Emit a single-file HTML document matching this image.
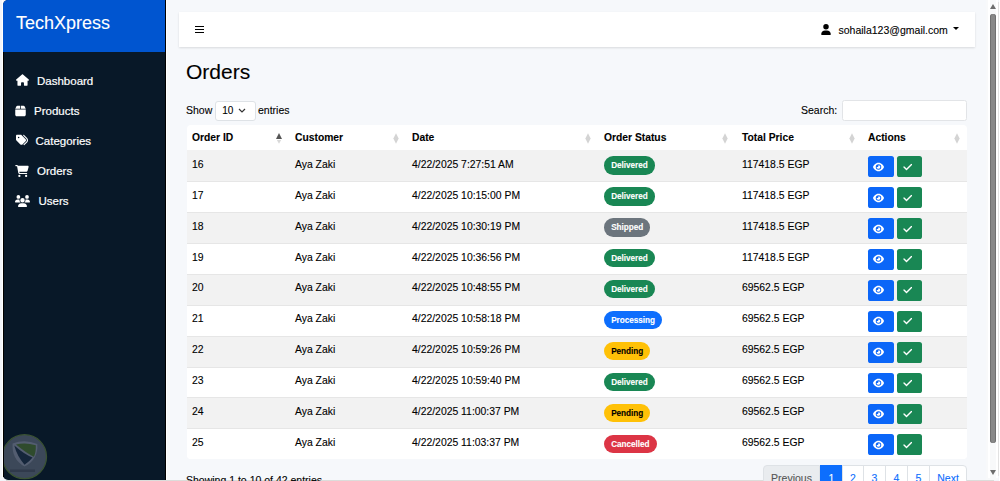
<!DOCTYPE html>
<html><head><meta charset="utf-8">
<style>
*{box-sizing:border-box;margin:0;padding:0}
html,body{width:1000px;height:481px;overflow:hidden;background:#f3f5fa;font-family:"Liberation Sans",sans-serif;color:#000;-webkit-text-stroke:0.1px currentColor}
.win{position:absolute;left:3px;top:0;width:995px;height:480px;background:#f6f8fb;border-radius:5px;overflow:hidden}
.side{position:absolute;left:3px;top:0;width:163px;height:480px;background:#081828;border-radius:5px 0 0 5px;overflow:hidden}
.brand{position:absolute;left:0;top:0;width:163px;height:52px;background:#0055d0}
.brand span{position:absolute;left:13px;top:13px;font-size:18px;color:#fff;line-height:20px;white-space:nowrap}
.nav{position:absolute;left:0;height:14px;width:160px;font-size:11.5px;color:#fff;white-space:nowrap;line-height:14px}
.nav svg{position:absolute;fill:#fff}
.nav span{position:absolute;top:0;-webkit-text-stroke:0.2px #fff}
.a{position:absolute;white-space:nowrap}
.topbar{position:absolute;left:179px;top:12px;width:796px;height:35px;background:#fff;box-shadow:0 1px 2px rgba(0,0,0,.12)}
.sel{position:absolute;left:215px;top:100.5px;width:40.5px;height:20px;background:#fff;border:1px solid #dee2e6;border-radius:3px}
.inp{position:absolute;left:842px;top:100.3px;width:125px;height:20.5px;background:#fff;border:1px solid #e2e4e7;border-radius:2.5px}
.tbl{position:absolute;left:187px;top:124.6px;width:780px;height:334.6px;background:#fff;border-radius:4px;overflow:hidden}
.th{position:absolute;top:0;height:26px;left:0;width:780px;font-size:10.3px;font-weight:bold;color:#000}
.th span{position:absolute;top:7.6px;line-height:12px}
.si{position:absolute;top:8px;width:6px;height:11px}
.si i{position:absolute;left:0;width:0;height:0;border-left:3px solid transparent;border-right:3px solid transparent}
.si i.up{top:0;border-bottom:5px solid #e2e2e2}
.si i.dn{top:5.5px;border-top:5px solid #e2e2e2}
.si i.up.dk{border-bottom-color:#555}
.tr{position:absolute;left:0;width:780px;height:30.9px;border-top:1px solid #e6e6e6;font-size:10.4px;color:#000;background:#fff}
.tr.odd{background:#f2f2f2}
.tr.first{border-top-color:#f2f2f2}
.tr .c{position:absolute;top:7.6px;line-height:12px;white-space:nowrap}
.badge{position:absolute;top:5.2px;height:18.3px;line-height:20px;padding:0 7.2px 0 7.7px;border-radius:9.2px;font-size:8.2px;letter-spacing:-0.05px;font-weight:bold;color:#fff;white-space:nowrap}
.bg-s{background:#198754}.bg-g{background:#6c757d}.bg-p{background:#0d6efd}.bg-w{background:#ffc107;color:#000}.bg-d{background:#dc3545}
.btn{position:absolute;top:5.1px;height:20.8px;border-radius:2.6px;display:flex;align-items:center;justify-content:flex-start}
.btn svg{fill:#fff}
.bp{width:26px;background:#0b66f8;padding-left:5px}
.bs{width:24.3px;background:#198754;padding-left:5.6px}
.pg{position:absolute;top:465px;height:20px;border:1px solid #dee2e6;background:#fff;font-size:10.5px;color:#0d6efd;text-align:center;line-height:18px;padding-top:2.5px}
.sb{position:absolute;left:986px;top:0;width:12px;height:480px;background:#f8f9fa}
</style></head><body>
<div class="win"></div>
<div class="a" style="left:2px;top:0;width:1px;height:478px;background:#fff"></div>
<div class="a" style="left:6px;top:480px;width:988px;height:1px;background:#dcdcda"></div>
<div class="side">
  <div class="brand"><span>TechXpress</span></div>
<svg class="a" width="52" height="52" viewBox="0 0 52 52" style="left:-4px;top:431px">
<circle cx="25.5" cy="25.7" r="22" fill="#3c4859" stroke="#3a5233" stroke-width="1.3"/>
<path d="M13.6 12.6 Q25.5 7.5 38.3 13 Q39.5 28.5 25.5 35.6 Q12.5 28.5 13.6 12.6Z" fill="#535d70"/>
<path d="M15.3 14.6 Q18 25 25.5 33.8 Q31 30 33.5 26.5 Q26 24 15.3 14.6Z" fill="#15263b"/>
<path d="M17 13.6 Q26 11 36.8 14.3 Q37 22 34.8 25.8 Q27 22 17 13.6Z" fill="#2f4b2d"/>
<path d="M11 38.5 h25 v2.5 h-25z" fill="#2b3546" opacity=".7"/>
</svg>
</div>
<div class="nav" style="top:74px"><svg viewBox="0 0 576 512" width="13" height="12" style="left:15.6px;top:0"><path d="M575.8 255.5c0 18-15 32.1-32 32.1h-32l.7 160.2c0 2.7-.2 5.4-.5 8.1V472c0 22.1-17.9 40-40 40H456c-1.1 0-2.2 0-3.3-.1c-1.4 .1-2.8 .1-4.2 .1H416 392c-22.1 0-40-17.9-40-40V448 384c0-17.7-14.3-32-32-32H256c-17.7 0-32 14.3-32 32v64 24c0 22.1-17.9 40-40 40H160 128.1c-1.5 0-3-.1-4.5-.2c-1.2 .1-2.4 .2-3.6 .2H104c-22.1 0-40-17.9-40-40V360c0-.9 0-1.9 .1-2.8V287.6H32c-18 0-32-14-32-32.1c0-9 3-17 10-24L266.4 8c7-7 15-8 22-8s15 2 21 7L564.8 231.5c8 7 12 15 11 24z"/></svg><span style="left:37px;top:-0.5px">Dashboard</span></div>
<div class="nav" style="top:104px"><svg viewBox="0 0 448 512" width="11" height="12" style="left:15px;top:0.6px"><path d="M50.7 58.5L0 160H208V32H93.7C75.5 32 58.9 42.3 50.7 58.5zM240 160H448L397.3 58.5C389.1 42.3 372.5 32 354.3 32H240V160zm208 32H0V416c0 35.3 28.7 64 64 64H384c35.3 0 64-28.7 64-64V192z"/></svg><span style="left:34px;top:-0.5px">Products</span></div>
<div class="nav" style="top:134px"><svg viewBox="0 0 512 512" width="12" height="12" style="left:15.5px;top:0.4px"><path d="M345 39.1L472.8 168.4c52.4 53 52.4 138.2 0 191.2L360.8 472.9c-9.3 9.4-24.5 9.5-33.9 .2s-9.5-24.5-.2-33.9L438.6 325.9c33.9-34.3 33.9-89.4 0-123.7L310.9 72.9c-9.3-9.4-9.2-24.6 .2-33.9s24.6-9.2 33.9 .2zM0 229.5V80C0 53.5 21.5 32 48 32H197.5c17 0 33.3 6.7 45.3 18.7l168 168c25 25 25 65.5 0 90.5L277.3 442.7c-25 25-65.5 25-90.5 0l-168-168C6.7 262.7 0 246.5 0 229.5zM144 144a32 32 0 1 0 -64 0 32 32 0 1 0 64 0z"/></svg><span style="left:35.5px;top:-0.5px">Categories</span></div>
<div class="nav" style="top:164px"><svg viewBox="0 0 576 512" width="14" height="12" style="left:15px;top:0.7px"><path d="M0 24C0 10.7 10.7 0 24 0H69.5c22 0 41.5 12.8 50.6 32h411c26.3 0 45.5 25 38.6 50.4l-41 152.3c-8.5 31.4-37 53.3-69.5 53.3H170.7l5.4 28.5c2.2 11.3 12.1 19.5 23.6 19.5H488c13.3 0 24 10.7 24 24s-10.7 24-24 24H199.7c-34.6 0-64.3-24.6-70.7-58.5L77.4 54.5c-.7-3.8-4-6.5-7.9-6.5H24C10.7 48 0 37.300 0 24zM128 464a48 48 0 1 1 96 0 48 48 0 1 1 -96 0zm336-48a48 48 0 1 1 0 96 48 48 0 1 1 0-96z"/></svg><span style="left:37px;top:-0.5px">Orders</span></div>
<div class="nav" style="top:194px"><svg viewBox="0 0 640 512" width="15" height="12" style="left:15.3px;top:1px"><path d="M144 0a80 80 0 1 1 0 160A80 80 0 1 1 144 0zM512 0a80 80 0 1 1 0 160A80 80 0 1 1 512 0zM0 298.7C0 239.8 47.8 192 106.7 192h42.7c15.9 0 31 3.5 44.6 9.7c-1.3 7.2-1.9 14.7-1.9 22.3c0 38.2 16.8 72.5 43.3 96c-.2 0-.4 0-.7 0H21.3C9.6 320 0 310.4 0 298.7zM405.3 320c-.2 0-.4 0-.7 0c26.6-23.5 43.3-57.8 43.3-96c0-7.6-.7-15-1.9-22.3c13.6-6.3 28.7-9.7 44.6-9.7h42.7C592.2 192 640 239.8 640 298.7c0 11.8-9.6 21.3-21.3 21.3H405.3zM224 224a96 96 0 1 1 192 0 96 96 0 1 1 -192 0zM128 485.3C128 411.7 187.7 352 261.3 352H378.7C452.3 352 512 411.7 512 485.3c0 14.7-11.9 26.7-26.7 26.7H154.7c-14.7 0-26.7-11.9-26.7-26.7z"/></svg><span style="left:38.5px;top:-0.5px">Users</span></div>

<div class="a" style="left:164.5px;top:0;width:1.5px;height:480px;background:#000"></div>
<div class="a" style="left:166px;top:0;width:1px;height:480px;background:#fff"></div>
<div class="a" style="left:3px;top:52px;width:1px;height:425px;background:#000"></div>
<div class="topbar"></div>
<div class="a" style="left:195px;top:25.7px;width:9.3px;height:1.3px;background:#000"></div>
<div class="a" style="left:195px;top:28.8px;width:9.3px;height:1.3px;background:#000"></div>
<div class="a" style="left:195px;top:31.9px;width:9.3px;height:1.3px;background:#000"></div>
<svg class="a" viewBox="0 0 448 512" width="10" height="11" style="left:821px;top:24px"><path d="M224 256A128 128 0 1 0 224 0a128 128 0 1 0 0 256zm-45.7 48C79.8 304 0 383.8 0 482.3C0 498.7 13.3 512 29.7 512H418.3c16.4 0 29.7-13.3 29.7-29.7C448 383.8 368.2 304 269.7 304H178.3z"/></svg>
<div class="a" style="left:838.5px;top:24px;font-size:10.5px;line-height:13px;color:#000">sohaila123@gmail.com</div>
<div class="a" style="left:953px;top:27px;width:0;height:0;border-left:3px solid transparent;border-right:3px solid transparent;border-top:3px solid #000"></div>

<div class="a" style="left:186px;top:60px;font-size:21px;line-height:24px;color:#000">Orders</div>
<div class="a" style="left:186px;top:104px;font-size:10.5px;line-height:12px;color:#000">Show</div>
<div class="sel"></div>
<div class="a" style="left:222.3px;top:105px;font-size:10px;line-height:12px;color:#000">10</div>
<svg class="a" width="8" height="5" viewBox="0 0 8 5" style="left:238px;top:108px"><path d="M1 1l3 3 3-3" fill="none" stroke="#333" stroke-width="1.2"/></svg>
<div class="a" style="left:258px;top:104px;font-size:10.5px;line-height:12px;color:#000">entries</div>
<div class="a" style="left:801px;top:104px;font-size:10.5px;line-height:12px;color:#000">Search:</div>
<div class="inp"></div>

<div class="tbl">
  <div class="th">
    <span style="left:5px">Order ID</span>
    <span style="left:108px">Customer</span>
    <span style="left:225px">Date</span>
    <span style="left:417px">Order Status</span>
    <span style="left:555px">Total Price</span>
    <span style="left:681px">Actions</span>
    <svg class="si" style="left:89px" width="6" height="11" viewBox="0 0 6 11"><path d="M3 0 L6 5.9 L0 5.9Z" fill="#555"/><path d="M0.9 6.9 L5.1 6.9 L3 10.8Z" fill="#d8d8d8"/></svg><svg class="si" style="left:206px" width="6" height="11" viewBox="0 0 6 11"><path d="M3 0.2 L5.6 5.5 L3 10.8 L0.4 5.5Z" fill="#d4d4d4"/></svg><svg class="si" style="left:398px" width="6" height="11" viewBox="0 0 6 11"><path d="M3 0.2 L5.6 5.5 L3 10.8 L0.4 5.5Z" fill="#d4d4d4"/></svg><svg class="si" style="left:535px" width="6" height="11" viewBox="0 0 6 11"><path d="M3 0.2 L5.6 5.5 L3 10.8 L0.4 5.5Z" fill="#d4d4d4"/></svg><svg class="si" style="left:662px" width="6" height="11" viewBox="0 0 6 11"><path d="M3 0.2 L5.6 5.5 L3 10.8 L0.4 5.5Z" fill="#d4d4d4"/></svg><svg class="si" style="left:767px" width="6" height="11" viewBox="0 0 6 11"><path d="M3 0.2 L5.6 5.5 L3 10.8 L0.4 5.5Z" fill="#d4d4d4"/></svg>
  </div>
  <div style="position:absolute;top:-124.3px;left:0">
  <div class="tr odd first" style="top:150.00px"><span class="c" style="left:5px">16</span><span class="c" style="left:108px">Aya Zaki</span><span class="c" style="left:225px">4/22/2025 7:27:51 AM</span><span class="badge bg-s" style="left:416.5px">Delivered</span><span class="c" style="left:555px">117418.5 EGP</span><span class="btn bp" style="left:681px"><svg viewBox="0 0 576 512" width="11" height="10"><path d="M288 32c-80.8 0-145.5 36.8-192.6 80.6C48.6 156 17.3 208 2.5 243.7c-3.3 7.9-3.3 16.7 0 24.6C17.3 304 48.6 356 95.4 399.4C142.5 443.2 207.2 480 288 480s145.5-36.8 192.6-80.6c46.8-43.5 78.1-95.4 93-131.1c3.3-7.9 3.3-16.7 0-24.6c-14.9-35.7-46.2-87.7-93-131.1C433.5 68.8 368.8 32 288 32zM144 256a144 144 0 1 1 288 0 144 144 0 1 1 -288 0zm144-64c0 35.3-28.7 64-64 64c-7.1 0-13.9-1.2-20.3-3.3c-5.5-1.8-11.9 1.6-11.7 7.4c.3 6.9 1.3 13.8 3.2 20.7c13.7 51.2 66.4 81.6 117.6 67.9s81.6-66.4 67.9-117.6c-11.1-41.5-47.8-69.4-88.6-71.1c-5.8-.2-9.2 6.1-7.4 11.7c2.1 6.4 3.3 13.2 3.3 20.3z"/></svg></span><span class="btn bs" style="left:710.3px"><svg viewBox="0 0 448 512" width="9.5" height="10"><path d="M438.6 105.4c12.5 12.5 12.5 32.8 0 45.3l-256 256c-12.5 12.5-32.8 12.5-45.3 0l-128-128c-12.5-12.5-12.5-32.8 0-45.3s32.8-12.5 45.3 0L160 338.7 393.4 105.4c12.5-12.5 32.8-12.5 45.3 0z" stroke="#fff" stroke-width="6"/></svg></span></div>
<div class="tr" style="top:180.90px"><span class="c" style="left:5px">17</span><span class="c" style="left:108px">Aya Zaki</span><span class="c" style="left:225px">4/22/2025 10:15:00 PM</span><span class="badge bg-s" style="left:416.5px">Delivered</span><span class="c" style="left:555px">117418.5 EGP</span><span class="btn bp" style="left:681px"><svg viewBox="0 0 576 512" width="11" height="10"><path d="M288 32c-80.8 0-145.5 36.8-192.6 80.6C48.6 156 17.3 208 2.5 243.7c-3.3 7.9-3.3 16.7 0 24.6C17.3 304 48.6 356 95.4 399.4C142.5 443.2 207.2 480 288 480s145.5-36.8 192.6-80.6c46.8-43.5 78.1-95.4 93-131.1c3.3-7.9 3.3-16.7 0-24.6c-14.9-35.7-46.2-87.7-93-131.1C433.5 68.8 368.8 32 288 32zM144 256a144 144 0 1 1 288 0 144 144 0 1 1 -288 0zm144-64c0 35.3-28.7 64-64 64c-7.1 0-13.9-1.2-20.3-3.3c-5.5-1.8-11.9 1.6-11.7 7.4c.3 6.9 1.3 13.8 3.2 20.7c13.7 51.2 66.4 81.6 117.6 67.9s81.6-66.4 67.9-117.6c-11.1-41.5-47.8-69.4-88.6-71.1c-5.8-.2-9.2 6.1-7.4 11.7c2.1 6.4 3.3 13.2 3.3 20.3z"/></svg></span><span class="btn bs" style="left:710.3px"><svg viewBox="0 0 448 512" width="9.5" height="10"><path d="M438.6 105.4c12.5 12.5 12.5 32.8 0 45.3l-256 256c-12.5 12.5-32.8 12.5-45.3 0l-128-128c-12.5-12.5-12.5-32.8 0-45.3s32.8-12.5 45.3 0L160 338.7 393.4 105.4c12.5-12.5 32.8-12.5 45.3 0z" stroke="#fff" stroke-width="6"/></svg></span></div>
<div class="tr odd" style="top:211.80px"><span class="c" style="left:5px">18</span><span class="c" style="left:108px">Aya Zaki</span><span class="c" style="left:225px">4/22/2025 10:30:19 PM</span><span class="badge bg-g" style="left:416.5px">Shipped</span><span class="c" style="left:555px">117418.5 EGP</span><span class="btn bp" style="left:681px"><svg viewBox="0 0 576 512" width="11" height="10"><path d="M288 32c-80.8 0-145.5 36.8-192.6 80.6C48.6 156 17.3 208 2.5 243.7c-3.3 7.9-3.3 16.7 0 24.6C17.3 304 48.6 356 95.4 399.4C142.5 443.2 207.2 480 288 480s145.5-36.8 192.6-80.6c46.8-43.5 78.1-95.4 93-131.1c3.3-7.9 3.3-16.7 0-24.6c-14.9-35.7-46.2-87.7-93-131.1C433.5 68.8 368.8 32 288 32zM144 256a144 144 0 1 1 288 0 144 144 0 1 1 -288 0zm144-64c0 35.3-28.7 64-64 64c-7.1 0-13.9-1.2-20.3-3.3c-5.5-1.8-11.9 1.6-11.7 7.4c.3 6.9 1.3 13.8 3.2 20.7c13.7 51.2 66.4 81.6 117.6 67.9s81.6-66.4 67.9-117.6c-11.1-41.5-47.8-69.4-88.6-71.1c-5.8-.2-9.2 6.1-7.4 11.7c2.1 6.4 3.3 13.2 3.3 20.3z"/></svg></span><span class="btn bs" style="left:710.3px"><svg viewBox="0 0 448 512" width="9.5" height="10"><path d="M438.6 105.4c12.5 12.5 12.5 32.8 0 45.3l-256 256c-12.5 12.5-32.8 12.5-45.3 0l-128-128c-12.5-12.5-12.5-32.8 0-45.3s32.8-12.5 45.3 0L160 338.7 393.4 105.4c12.5-12.5 32.8-12.5 45.3 0z" stroke="#fff" stroke-width="6"/></svg></span></div>
<div class="tr" style="top:242.70px"><span class="c" style="left:5px">19</span><span class="c" style="left:108px">Aya Zaki</span><span class="c" style="left:225px">4/22/2025 10:36:56 PM</span><span class="badge bg-s" style="left:416.5px">Delivered</span><span class="c" style="left:555px">117418.5 EGP</span><span class="btn bp" style="left:681px"><svg viewBox="0 0 576 512" width="11" height="10"><path d="M288 32c-80.8 0-145.5 36.8-192.6 80.6C48.6 156 17.3 208 2.5 243.7c-3.3 7.9-3.3 16.7 0 24.6C17.3 304 48.6 356 95.4 399.4C142.5 443.2 207.2 480 288 480s145.5-36.8 192.6-80.6c46.8-43.5 78.1-95.4 93-131.1c3.3-7.9 3.3-16.7 0-24.6c-14.9-35.7-46.2-87.7-93-131.1C433.5 68.8 368.8 32 288 32zM144 256a144 144 0 1 1 288 0 144 144 0 1 1 -288 0zm144-64c0 35.3-28.7 64-64 64c-7.1 0-13.9-1.2-20.3-3.3c-5.5-1.8-11.9 1.6-11.7 7.4c.3 6.9 1.3 13.8 3.2 20.7c13.7 51.2 66.4 81.6 117.6 67.9s81.6-66.4 67.9-117.6c-11.1-41.5-47.8-69.4-88.6-71.1c-5.8-.2-9.2 6.1-7.4 11.7c2.1 6.4 3.3 13.2 3.3 20.3z"/></svg></span><span class="btn bs" style="left:710.3px"><svg viewBox="0 0 448 512" width="9.5" height="10"><path d="M438.6 105.4c12.5 12.5 12.5 32.8 0 45.3l-256 256c-12.5 12.5-32.8 12.5-45.3 0l-128-128c-12.5-12.5-12.5-32.8 0-45.3s32.8-12.5 45.3 0L160 338.7 393.4 105.4c12.5-12.5 32.8-12.5 45.3 0z" stroke="#fff" stroke-width="6"/></svg></span></div>
<div class="tr odd" style="top:273.60px"><span class="c" style="left:5px">20</span><span class="c" style="left:108px">Aya Zaki</span><span class="c" style="left:225px">4/22/2025 10:48:55 PM</span><span class="badge bg-s" style="left:416.5px">Delivered</span><span class="c" style="left:555px">69562.5 EGP</span><span class="btn bp" style="left:681px"><svg viewBox="0 0 576 512" width="11" height="10"><path d="M288 32c-80.8 0-145.5 36.8-192.6 80.6C48.6 156 17.3 208 2.5 243.7c-3.3 7.9-3.3 16.7 0 24.6C17.3 304 48.6 356 95.4 399.4C142.5 443.2 207.2 480 288 480s145.5-36.8 192.6-80.6c46.8-43.5 78.1-95.4 93-131.1c3.3-7.9 3.3-16.7 0-24.6c-14.9-35.7-46.2-87.7-93-131.1C433.5 68.8 368.8 32 288 32zM144 256a144 144 0 1 1 288 0 144 144 0 1 1 -288 0zm144-64c0 35.3-28.7 64-64 64c-7.1 0-13.9-1.2-20.3-3.3c-5.5-1.8-11.9 1.6-11.7 7.4c.3 6.9 1.3 13.8 3.2 20.7c13.7 51.2 66.4 81.6 117.6 67.9s81.6-66.4 67.9-117.6c-11.1-41.5-47.8-69.4-88.6-71.1c-5.8-.2-9.2 6.1-7.4 11.7c2.1 6.4 3.3 13.2 3.3 20.3z"/></svg></span><span class="btn bs" style="left:710.3px"><svg viewBox="0 0 448 512" width="9.5" height="10"><path d="M438.6 105.4c12.5 12.5 12.5 32.8 0 45.3l-256 256c-12.5 12.5-32.8 12.5-45.3 0l-128-128c-12.5-12.5-12.5-32.8 0-45.3s32.8-12.5 45.3 0L160 338.7 393.4 105.4c12.5-12.5 32.8-12.5 45.3 0z" stroke="#fff" stroke-width="6"/></svg></span></div>
<div class="tr" style="top:304.50px"><span class="c" style="left:5px">21</span><span class="c" style="left:108px">Aya Zaki</span><span class="c" style="left:225px">4/22/2025 10:58:18 PM</span><span class="badge bg-p" style="left:416.5px">Processing</span><span class="c" style="left:555px">69562.5 EGP</span><span class="btn bp" style="left:681px"><svg viewBox="0 0 576 512" width="11" height="10"><path d="M288 32c-80.8 0-145.5 36.8-192.6 80.6C48.6 156 17.3 208 2.5 243.7c-3.3 7.9-3.3 16.7 0 24.6C17.3 304 48.6 356 95.4 399.4C142.5 443.2 207.2 480 288 480s145.5-36.8 192.6-80.6c46.8-43.5 78.1-95.4 93-131.1c3.3-7.9 3.3-16.7 0-24.6c-14.9-35.7-46.2-87.7-93-131.1C433.5 68.8 368.8 32 288 32zM144 256a144 144 0 1 1 288 0 144 144 0 1 1 -288 0zm144-64c0 35.3-28.7 64-64 64c-7.1 0-13.9-1.2-20.3-3.3c-5.5-1.8-11.9 1.6-11.7 7.4c.3 6.9 1.3 13.8 3.2 20.7c13.7 51.2 66.4 81.6 117.6 67.9s81.6-66.4 67.9-117.6c-11.1-41.5-47.8-69.4-88.6-71.1c-5.8-.2-9.2 6.1-7.4 11.7c2.1 6.4 3.3 13.2 3.3 20.3z"/></svg></span><span class="btn bs" style="left:710.3px"><svg viewBox="0 0 448 512" width="9.5" height="10"><path d="M438.6 105.4c12.5 12.5 12.5 32.8 0 45.3l-256 256c-12.5 12.5-32.8 12.5-45.3 0l-128-128c-12.5-12.5-12.5-32.8 0-45.3s32.8-12.5 45.3 0L160 338.7 393.4 105.4c12.5-12.5 32.8-12.5 45.3 0z" stroke="#fff" stroke-width="6"/></svg></span></div>
<div class="tr odd" style="top:335.40px"><span class="c" style="left:5px">22</span><span class="c" style="left:108px">Aya Zaki</span><span class="c" style="left:225px">4/22/2025 10:59:26 PM</span><span class="badge bg-w" style="left:416.5px">Pending</span><span class="c" style="left:555px">69562.5 EGP</span><span class="btn bp" style="left:681px"><svg viewBox="0 0 576 512" width="11" height="10"><path d="M288 32c-80.8 0-145.5 36.8-192.6 80.6C48.6 156 17.3 208 2.5 243.7c-3.3 7.9-3.3 16.7 0 24.6C17.3 304 48.6 356 95.4 399.4C142.5 443.2 207.2 480 288 480s145.5-36.8 192.6-80.6c46.8-43.5 78.1-95.4 93-131.1c3.3-7.9 3.3-16.7 0-24.6c-14.9-35.7-46.2-87.7-93-131.1C433.5 68.8 368.8 32 288 32zM144 256a144 144 0 1 1 288 0 144 144 0 1 1 -288 0zm144-64c0 35.3-28.7 64-64 64c-7.1 0-13.9-1.2-20.3-3.3c-5.5-1.8-11.9 1.6-11.7 7.4c.3 6.9 1.3 13.8 3.2 20.7c13.7 51.2 66.4 81.6 117.6 67.9s81.6-66.4 67.9-117.6c-11.1-41.5-47.8-69.4-88.6-71.1c-5.8-.2-9.2 6.1-7.4 11.7c2.1 6.4 3.3 13.2 3.3 20.3z"/></svg></span><span class="btn bs" style="left:710.3px"><svg viewBox="0 0 448 512" width="9.5" height="10"><path d="M438.6 105.4c12.5 12.5 12.5 32.8 0 45.3l-256 256c-12.5 12.5-32.8 12.5-45.3 0l-128-128c-12.5-12.5-12.5-32.8 0-45.3s32.8-12.5 45.3 0L160 338.7 393.4 105.4c12.5-12.5 32.8-12.5 45.3 0z" stroke="#fff" stroke-width="6"/></svg></span></div>
<div class="tr" style="top:366.30px"><span class="c" style="left:5px">23</span><span class="c" style="left:108px">Aya Zaki</span><span class="c" style="left:225px">4/22/2025 10:59:40 PM</span><span class="badge bg-s" style="left:416.5px">Delivered</span><span class="c" style="left:555px">69562.5 EGP</span><span class="btn bp" style="left:681px"><svg viewBox="0 0 576 512" width="11" height="10"><path d="M288 32c-80.8 0-145.5 36.8-192.6 80.6C48.6 156 17.3 208 2.5 243.7c-3.3 7.9-3.3 16.7 0 24.6C17.3 304 48.6 356 95.4 399.4C142.5 443.2 207.2 480 288 480s145.5-36.8 192.6-80.6c46.8-43.5 78.1-95.4 93-131.1c3.3-7.9 3.3-16.7 0-24.6c-14.9-35.7-46.2-87.7-93-131.1C433.5 68.8 368.8 32 288 32zM144 256a144 144 0 1 1 288 0 144 144 0 1 1 -288 0zm144-64c0 35.3-28.7 64-64 64c-7.1 0-13.9-1.2-20.3-3.3c-5.5-1.8-11.9 1.6-11.7 7.4c.3 6.9 1.3 13.8 3.2 20.7c13.7 51.2 66.4 81.6 117.6 67.9s81.6-66.4 67.9-117.6c-11.1-41.5-47.8-69.4-88.6-71.1c-5.8-.2-9.2 6.1-7.4 11.7c2.1 6.4 3.3 13.2 3.3 20.3z"/></svg></span><span class="btn bs" style="left:710.3px"><svg viewBox="0 0 448 512" width="9.5" height="10"><path d="M438.6 105.4c12.5 12.5 12.5 32.8 0 45.3l-256 256c-12.5 12.5-32.8 12.5-45.3 0l-128-128c-12.5-12.5-12.5-32.8 0-45.3s32.8-12.5 45.3 0L160 338.7 393.4 105.4c12.5-12.5 32.8-12.5 45.3 0z" stroke="#fff" stroke-width="6"/></svg></span></div>
<div class="tr odd" style="top:397.20px"><span class="c" style="left:5px">24</span><span class="c" style="left:108px">Aya Zaki</span><span class="c" style="left:225px">4/22/2025 11:00:37 PM</span><span class="badge bg-w" style="left:416.5px">Pending</span><span class="c" style="left:555px">69562.5 EGP</span><span class="btn bp" style="left:681px"><svg viewBox="0 0 576 512" width="11" height="10"><path d="M288 32c-80.8 0-145.5 36.8-192.6 80.6C48.6 156 17.3 208 2.5 243.7c-3.3 7.9-3.3 16.7 0 24.6C17.3 304 48.6 356 95.4 399.4C142.5 443.2 207.2 480 288 480s145.5-36.8 192.6-80.6c46.8-43.5 78.1-95.4 93-131.1c3.3-7.9 3.3-16.7 0-24.6c-14.9-35.7-46.2-87.7-93-131.1C433.5 68.8 368.8 32 288 32zM144 256a144 144 0 1 1 288 0 144 144 0 1 1 -288 0zm144-64c0 35.3-28.7 64-64 64c-7.1 0-13.9-1.2-20.3-3.3c-5.5-1.8-11.9 1.6-11.7 7.4c.3 6.9 1.3 13.8 3.2 20.7c13.7 51.2 66.4 81.6 117.6 67.9s81.6-66.4 67.9-117.6c-11.1-41.5-47.8-69.4-88.6-71.1c-5.8-.2-9.2 6.1-7.4 11.7c2.1 6.4 3.3 13.2 3.3 20.3z"/></svg></span><span class="btn bs" style="left:710.3px"><svg viewBox="0 0 448 512" width="9.5" height="10"><path d="M438.6 105.4c12.5 12.5 12.5 32.8 0 45.3l-256 256c-12.5 12.5-32.8 12.5-45.3 0l-128-128c-12.5-12.5-12.5-32.8 0-45.3s32.8-12.5 45.3 0L160 338.7 393.4 105.4c12.5-12.5 32.8-12.5 45.3 0z" stroke="#fff" stroke-width="6"/></svg></span></div>
<div class="tr" style="top:428.10px"><span class="c" style="left:5px">25</span><span class="c" style="left:108px">Aya Zaki</span><span class="c" style="left:225px">4/22/2025 11:03:37 PM</span><span class="badge bg-d" style="left:416.5px">Cancelled</span><span class="c" style="left:555px">69562.5 EGP</span><span class="btn bp" style="left:681px"><svg viewBox="0 0 576 512" width="11" height="10"><path d="M288 32c-80.8 0-145.5 36.8-192.6 80.6C48.6 156 17.3 208 2.5 243.7c-3.3 7.9-3.3 16.7 0 24.6C17.3 304 48.6 356 95.4 399.4C142.5 443.2 207.2 480 288 480s145.5-36.8 192.6-80.6c46.8-43.5 78.1-95.4 93-131.1c3.3-7.9 3.3-16.7 0-24.6c-14.9-35.7-46.2-87.7-93-131.1C433.5 68.8 368.8 32 288 32zM144 256a144 144 0 1 1 288 0 144 144 0 1 1 -288 0zm144-64c0 35.3-28.7 64-64 64c-7.1 0-13.9-1.2-20.3-3.3c-5.5-1.8-11.9 1.6-11.7 7.4c.3 6.9 1.3 13.8 3.2 20.7c13.7 51.2 66.4 81.6 117.6 67.9s81.6-66.4 67.9-117.6c-11.1-41.5-47.8-69.4-88.6-71.1c-5.8-.2-9.2 6.1-7.4 11.7c2.1 6.4 3.3 13.2 3.3 20.3z"/></svg></span><span class="btn bs" style="left:710.3px"><svg viewBox="0 0 448 512" width="9.5" height="10"><path d="M438.6 105.4c12.5 12.5 12.5 32.8 0 45.3l-256 256c-12.5 12.5-32.8 12.5-45.3 0l-128-128c-12.5-12.5-12.5-32.8 0-45.3s32.8-12.5 45.3 0L160 338.7 393.4 105.4c12.5-12.5 32.8-12.5 45.3 0z" stroke="#fff" stroke-width="6"/></svg></span></div>
  </div>
</div>

<div class="a" style="left:186px;top:473.5px;font-size:10.5px;line-height:12px;color:#000">Showing 1 to 10 of 42 entries</div>
<div class="pg" style="left:763px;width:57px;background:#e9ecef;color:#555;border-radius:4px 0 0 0">Previous</div>
<div class="pg" style="left:820px;width:23px;background:#0d6efd;color:#fff;border-color:#0d6efd">1</div>
<div class="pg" style="left:842px;width:22px">2</div>
<div class="pg" style="left:863px;width:23px">3</div>
<div class="pg" style="left:885px;width:23px">4</div>
<div class="pg" style="left:907px;width:23px">5</div>
<div class="pg" style="left:929px;width:38px;border-radius:0 4px 0 0">Next</div>

<div class="sb"></div>
<div class="a" style="left:988px;top:0;width:2px;height:478px;background:#fff"></div>
<div class="a" style="left:996px;top:0;width:2px;height:478px;background:#fff"></div>
<div class="a" style="left:998px;top:2px;width:1px;height:474px;background:#e2e2e2"></div>
<div class="a" style="left:999px;top:0;width:1px;height:481px;background:#fff"></div>
<div class="a" style="left:990px;top:4px;width:0;height:0;border-left:3px solid transparent;border-right:3px solid transparent;border-bottom:5px solid #6d6d6d"></div>
<div class="a" style="left:990px;top:14px;width:6px;height:429px;background:#888;border-radius:3px;box-shadow:inset 1px 0 0 #707070,inset -1px 0 0 #707070"></div>
<div class="a" style="left:990px;top:470px;width:0;height:0;border-left:3px solid transparent;border-right:3px solid transparent;border-top:5px solid #6d6d6d"></div>
</body></html>
